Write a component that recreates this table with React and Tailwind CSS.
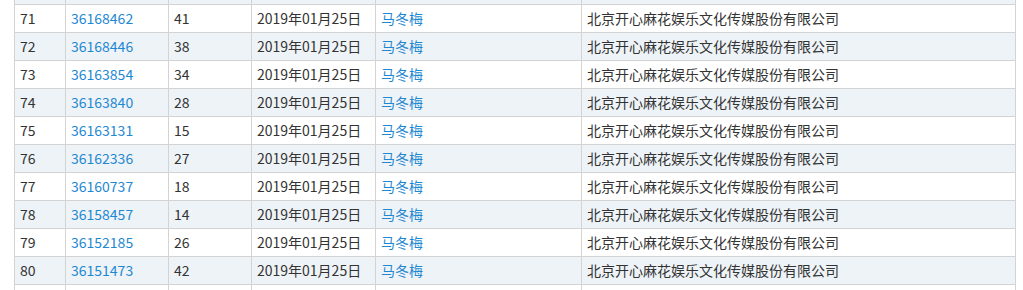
const rows = [
  [71, "36168462", "41"],
  [72, "36168446", "38"],
  [73, "36163854", "34"],
  [74, "36163840", "28"],
  [75, "36163131", "15"],
  [76, "36162336", "27"],
  [77, "36160737", "18"],
  [78, "36158457", "14"],
  [79, "36152185", "26"],
  [80, "36151473", "42"],
];

const grid = "grid grid-cols-[51px_103px_83px_124px_206px_434px] border-b border-[#d3d3d3]";
const cell = "border-r border-[#d3d3d3] pl-[5px] flex items-center";

// rows cut by the window edges: only the borders and the fill show
function Stub({ h, striped }) {
  return (
    <div className={grid + " " + h + " " + (striped ? "bg-[#eef3f8]" : "bg-white")}>
      {[0, 1, 2, 3, 4, 5].map((i) => (
        <div key={i} className="border-r border-[#d3d3d3]" />
      ))}
    </div>
  );
}

function Row({ no, reg, cls }) {
  const striped = no % 2 === 0;
  return (
    <div className={grid + " h-[28px] " + (striped ? "bg-[#eef3f8]" : "bg-white")}>
      <div className={cell}>{no}</div>
      <div className={cell + " text-[#1e88d2]"}>{reg}</div>
      <div className={cell}>{cls}</div>
      <div className={cell}>2019年01月25日</div>
      <div className={cell + " text-[#1e88d2]"}>马冬梅</div>
      <div className={cell}>北京开心麻花娱乐文化传媒股份有限公司</div>
    </div>
  );
}

export default function App() {
  return (
    <div className="w-[1023px] h-[290px] overflow-hidden bg-white">
      <div
        className="ml-[14px] w-[1002px] border-l border-[#d3d3d3] text-[14px] text-[#333]"
        style={{ fontFamily: '"Noto Sans CJK SC", "Noto Sans", sans-serif' }}
      >
        <Stub h="h-[5px]" striped />
        {rows.map(([no, reg, cls]) => (
          <Row key={no} no={no} reg={reg} cls={cls} />
        ))}
        <Stub h="h-[28px]" />
      </div>
    </div>
  );
}
